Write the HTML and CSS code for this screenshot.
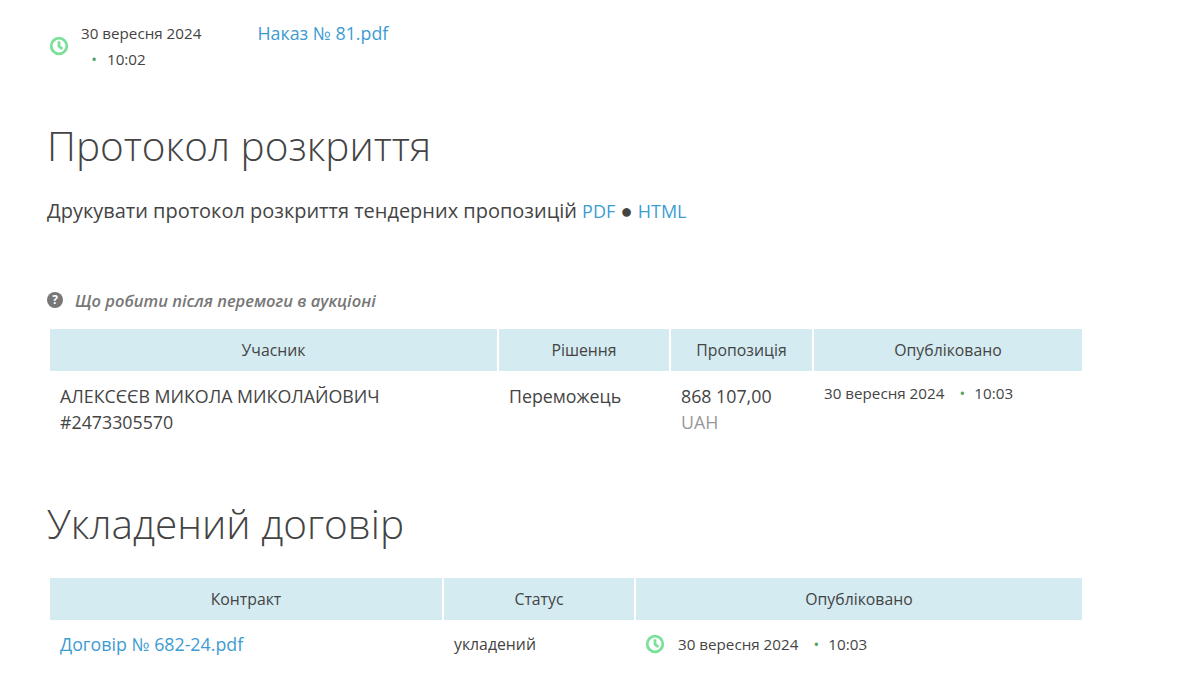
FILE: index.html
```html
<!DOCTYPE html>
<html>
<head>
    <title>Тендер</title>
    <link rel="stylesheet" href="styles.css">
</head>
<body>
    <div class="doc-row">
        <svg class="clock" viewBox="0 0 20 20"><circle cx="10" cy="10" r="7.8"/><path d="M10 5.2V10.3L13.4 12.8"/></svg>
        <div class="doc-date">
            <div>30 вересня 2024</div>
            <div class="doc-time"><span class="dot">•</span>10:02</div>
        </div>
        <a class="doc-link" href="#">Наказ № 81.pdf</a>
    </div>

    <h2 class="first">Протокол розкриття</h2>
    <p class="print">Друкувати протокол розкриття тендерних пропозицій <a href="#">PDF</a> ● <a href="#">HTML</a></p>

    <div class="help">
        <svg class="help-icon" viewBox="0 0 16 16"><circle cx="8" cy="8" r="8"/><text x="8" y="12.2" text-anchor="middle">?</text></svg>
        <span>Що робити після перемоги в аукціоні</span>
    </div>

    <table class="t1">
        <tr>
            <th class="c1">Учасник</th>
            <th class="c2">Рішення</th>
            <th class="c3">Пропозиція</th>
            <th>Опубліковано</th>
        </tr>
        <tr>
            <td class="name">АЛЕКСЄЄВ МИКОЛА МИКОЛАЙОВИЧ<br>#2473305570</td>
            <td>Переможець</td>
            <td>868 107,00<br><span class="cur">UAH</span></td>
            <td class="small">30 вересня 2024<span class="dot wide">•</span>10:03</td>
        </tr>
    </table>

    <h2>Укладений договір</h2>

    <table class="t2">
        <tr>
            <th class="k1">Контракт</th>
            <th class="k2">Статус</th>
            <th>Опубліковано</th>
        </tr>
        <tr>
            <td class="name"><a href="#">Договір № 682-24.pdf</a></td>
            <td class="status">укладений</td>
            <td class="small">
                <div class="when">
                    <svg class="clock" viewBox="0 0 20 20"><circle cx="10" cy="10" r="7.8"/><path d="M10 5.2V10.3L13.4 12.8"/></svg>
                    <span>30 вересня 2024<span class="dot wide">•</span>10:03</span>
                </div>
            </td>
        </tr>
    </table>
</body>
</html>
```

FILE: styles.css
```css
html, body {
    height: 686px;
    overflow: hidden;
}
body {
    margin: 0;
    padding: 0 118px 0 47px;
    background-color: #ffffff;
    color: #444444;
    font-family: "Open Sans", sans-serif;
    font-size: 17.8px;
}
a {
    color: #3d9cd2;
    text-decoration: none;
}
.doc-row {
    display: flex;
    align-items: flex-start;
    padding: 20px 0 0 2px;
    height: 65px;
}
.clock {
    width: 20px;
    height: 20px;
    flex: none;
    fill: none;
    stroke: #7be09a;
    stroke-width: 2.8;
}
.doc-row .clock {
    margin: 16px 12px 0 0;
}
.doc-date {
    width: 176.5px;
    font-size: 15.2px;
    line-height: 26px;
}
.doc-time {
    padding-left: 8px;
}
.dot {
    color: #55a05f;
    display: inline-block;
    width: 10px;
    margin-right: 8px;
    font-size: 15px;
    text-align: center;
}
.dot.wide {
    box-sizing: border-box;
    width: 30px;
    margin-right: 0;
    padding-left: 6px;
}
.doc-link {
    margin-top: 1px;
    font-size: 17.8px;
    line-height: 24px;
}
h2 {
    margin: 62px 0 0;
    font-size: 40.5px;
    font-weight: 300;
    line-height: 54px;
    color: #444444;
}
h2.first {
    margin-top: 34px;
}
.print {
    margin: 25px 0 0;
    font-size: 19.98px;
    line-height: 26px;
}
.print a {
    font-size: 18px;
}
.help {
    display: flex;
    align-items: center;
    margin: 64px 0 0;
    height: 24px;
    color: #777777;
    font-size: 16.5px;
    font-weight: 600;
    font-style: italic;
}
.help-icon {
    width: 16px;
    height: 16px;
    margin-right: 12px;
    fill: #777777;
}
.help-icon text {
    fill: #ffffff;
    font-size: 12px;
    font-weight: 700;
    font-style: normal;
    font-family: "Open Sans", sans-serif;
}
table {
    width: 1032px;
    margin-left: 3px;
    border-collapse: collapse;
    table-layout: fixed;
}
th {
    height: 42px;
    padding: 0;
    background-color: #d4ebf2;
    border-left: 2px solid #ffffff;
    font-size: 15.8px;
    font-weight: 500;
    color: #444444;
    text-align: center;
}
th:first-child {
    border-left: 0;
}
td {
    padding: 12px 11px 0;
    vertical-align: top;
    line-height: 26px;
}
td.name {
    padding-left: 10px;
}
.t1 {
    margin-top: 17px;
}
.c1 { width: 447px; }
.c2 { width: 170px; }
.c3 { width: 141px; }
.k1 { width: 392px; }
.k2 { width: 190px; }
.cur {
    color: #999999;
}
td.small {
    padding-top: 9px;
    font-size: 15.2px;
}
.when {
    display: flex;
    align-items: center;
}
.when .clock {
    margin: 0 13px 0 -1px;
}
.t2 {
    margin-top: 27px;
}
.t2 td {
    padding-top: 11px;
}
.t2 td.status {
    font-size: 15.8px;
}
```
